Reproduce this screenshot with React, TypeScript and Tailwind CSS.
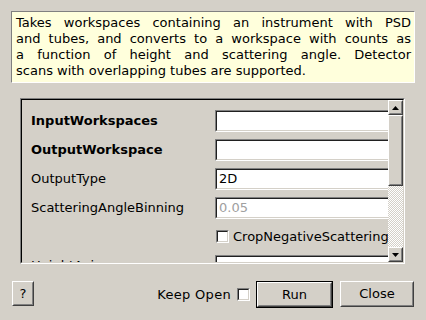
import React from 'react';

const font = { fontFamily: '"DejaVu Sans", sans-serif' };

const Sunken: React.FC<{ className?: string; children?: React.ReactNode }> = ({ className = '', children }) => (
  <div className={`border border-t-[#808080] border-l-[#808080] border-b-white border-r-white ${className}`}>
    <div className="h-full w-full border border-t-[#202020] border-l-[#202020] border-b-[#d4d0c8] border-r-[#d4d0c8] bg-white">
      {children}
    </div>
  </div>
);

const Raised: React.FC<{ className?: string; children?: React.ReactNode }> = ({ className = '', children }) => (
  <div className={`border border-t-white border-l-white border-b-[#404040] border-r-[#404040] ${className}`}>
    <div className="flex h-full w-full items-center justify-center border border-t-[#d4d0c8] border-l-[#d4d0c8] border-b-[#808080] border-r-[#808080] bg-[#d4d0c8]">
      {children}
    </div>
  </div>
);

const Row: React.FC<{ label: string; bold?: boolean; value?: string; muted?: boolean }> = ({ label, bold, value, muted }) => (
  <div className="flex h-[29px] items-center">
    <div className={`w-[193px] shrink-0 pl-[9px] text-[13px] ${bold ? 'font-bold' : ''}`}>{label}</div>
    <Sunken className="h-[22px] w-[200px] shrink-0">
      <div className={`pl-[2px] text-[13px] leading-[18px] ${muted ? 'text-[#a0a0a0]' : 'text-black'}`}>{value}</div>
    </Sunken>
  </div>
);

export default function App() {
  return (
    <div className="h-[320px] w-[426px] overflow-hidden bg-[#d4d0c8] text-black" style={font}>
      <div className="px-[11px] pt-[11px]">
        <div className="border border-t-[#808080] border-l-[#808080] border-b-white border-r-white bg-[#ffffdc] pb-[3px] pl-[4px] pr-[3px] pt-[3px] text-[13px] leading-[16px]">
          <div className="text-justify [text-align-last:justify]">Takes workspaces containing an instrument with PSD</div>
          <div className="text-justify [text-align-last:justify]">and tubes, and converts to a workspace with counts as</div>
          <div className="text-justify [text-align-last:justify]">a function of height and scattering angle. Detector</div>
          <div>scans with overlapping tubes are supported.</div>
        </div>
      </div>

      <div className="ml-[20px] mt-[15px] h-[166px] w-[385px] border border-t-[#808080] border-l-[#808080] border-b-white border-r-white">
        <div className="flex h-full w-full border border-t-black border-l-black border-b-[#d4d0c8] border-r-[#d4d0c8]">
          <div className="flex-1 overflow-hidden pt-[6px]">
            <Row label="InputWorkspaces" bold />
            <Row label="OutputWorkspace" bold />
            <Row label="OutputType" value="2D" />
            <Row label="ScatteringAngleBinning" value="0.05" muted />
            <div className="flex h-[29px] items-center whitespace-nowrap">
              <div className="w-[194px] shrink-0" />
              <Sunken className="h-[13px] w-[13px] shrink-0" />
              <span className="ml-[4px] text-[13px]">CropNegativeScatteringAngles</span>
            </div>
            <Row label="HeightAxis" />
          </div>
          <div className="flex w-[15px] flex-col">
            <Raised className="h-[15px]">
              <svg width="7" height="4" viewBox="0 0 7 4"><path d="M3.5 0L7 4H0z" fill="black" /></svg>
            </Raised>
            <Raised className="h-[71px]" />
            <div className="flex-1 bg-[repeating-conic-gradient(#d4d0c8_0_25%,#ffffff_0_50%)] bg-[length:2px_2px]" />
            <Raised className="h-[15px]">
              <svg width="7" height="4" viewBox="0 0 7 4"><path d="M0 0H7L3.5 4z" fill="black" /></svg>
            </Raised>
          </div>
        </div>
      </div>

      <div className="mt-[17px] flex items-start px-[12px]">
        <Raised className="h-[25px] w-[22px]">
          <span className="text-[13px]">?</span>
        </Raised>
        <div className="flex-1" />
        <div className="mt-[4px] flex items-center">
          <span className="text-[13px] tracking-[0.3px]">Keep Open</span>
          <Sunken className="ml-[6px] h-[13px] w-[13px]" />
        </div>
        <div className="ml-[6px] h-[27px] w-[77px] border border-black">
          <Raised className="h-full w-full">
            <span className="text-[13px]">Run</span>
          </Raised>
        </div>
        <Raised className="ml-[7px] h-[26px] w-[74px]">
          <span className="text-[13px]">Close</span>
        </Raised>
      </div>
    </div>
  );
}
